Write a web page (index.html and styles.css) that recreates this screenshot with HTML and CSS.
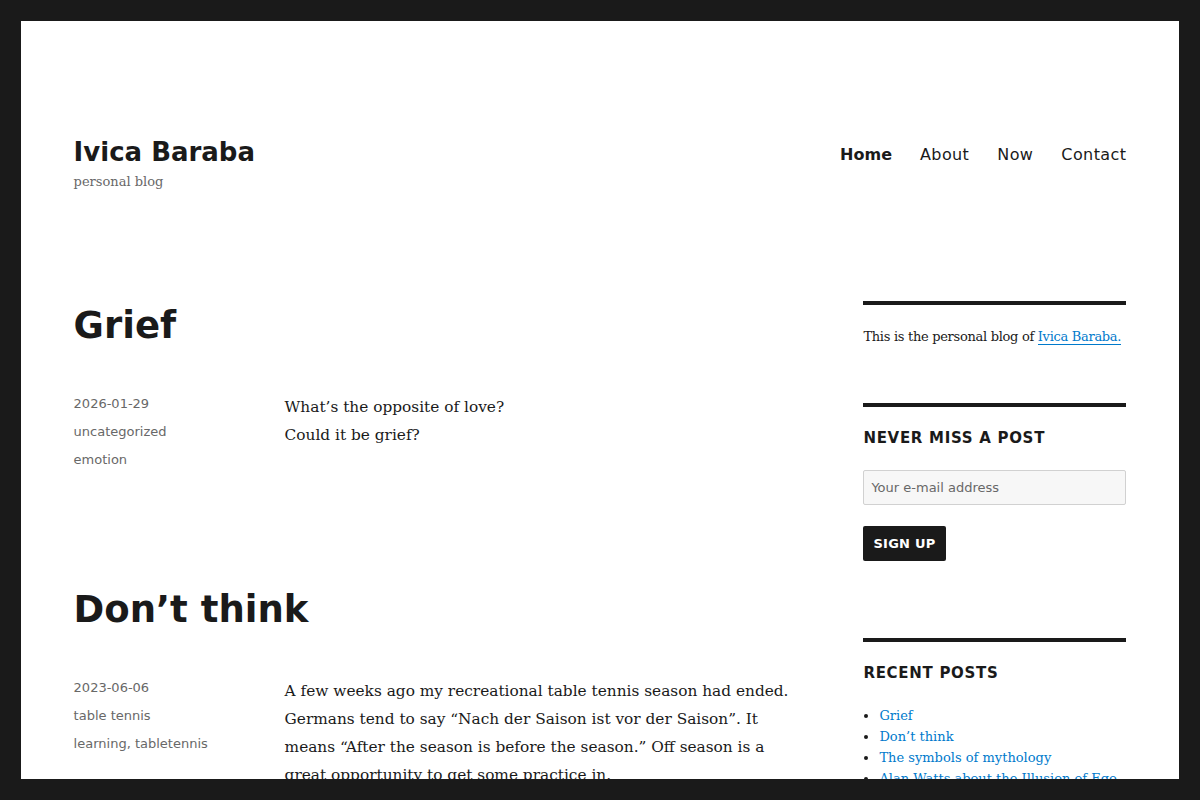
FILE: index.html
```html
<!DOCTYPE html>
<html lang="en">
<head>
<meta charset="utf-8">
<title>Ivica Baraba – personal blog</title>
<link rel="stylesheet" href="styles.css">
</head>
<body>
<div class="site">
  <header class="site-header">
    <div class="branding">
      <p class="site-title"><a href="#">Ivica Baraba</a></p>
      <p class="site-description">personal blog</p>
    </div>
    <nav class="main-nav">
      <a href="#" class="current">Home</a>
      <a href="#">About</a>
      <a href="#">Now</a>
      <a href="#">Contact</a>
    </nav>
  </header>

  <div class="site-content">
    <main class="content-area">
      <article class="post">
        <h2 class="entry-title"><a href="#">Grief</a></h2>
        <div class="entry-body">
          <footer class="entry-footer">
            <span>2026-01-29</span>
            <span>uncategorized</span>
            <span>emotion</span>
          </footer>
          <div class="entry-content">
            <p>What’s the opposite of love?<br>Could it be grief?</p>
          </div>
        </div>
      </article>

      <article class="post">
        <h2 class="entry-title"><a href="#">Don’t think</a></h2>
        <div class="entry-body">
          <footer class="entry-footer">
            <span>2023-06-06</span>
            <span>table tennis</span>
            <span>learning, tabletennis</span>
          </footer>
          <div class="entry-content">
            <p>A few weeks ago my recreational table tennis season had ended. Germans tend to say “Nach der Saison ist vor der Saison”. It means “After the season is before the season.” Off season is a great opportunity to get some practice in.</p>
            <p>Last year I played with a coach and it helped me a lot. This year I wanted to try something different.</p>
          </div>
        </div>
      </article>
    </main>

    <aside class="sidebar">
      <section class="widget">
        <p class="widget-text">This is the personal blog of <a href="#">Ivica Baraba.</a></p>
      </section>
      <section class="widget">
        <h2 class="widget-title">Never miss a post</h2>
        <form class="signup">
          <input type="email" placeholder="Your e-mail address">
          <button type="button">Sign up</button>
        </form>
      </section>
      <section class="widget">
        <h2 class="widget-title">Recent Posts</h2>
        <ul class="recent">
          <li><a href="#">Grief</a></li>
          <li><a href="#">Don’t think</a></li>
          <li><a href="#">The symbols of mythology</a></li>
          <li><a href="#">Alan Watts about the Illusion of Ego</a></li>
          <li><a href="#">Choosing a path</a></li>
        </ul>
      </section>
    </aside>
  </div>
</div>
</body>
</html>
```
FILE: styles.css
```css
html, body {
  margin: 0;
  padding: 0;
}
body {
  background: #1a1a1a;
  color: #1a1a1a;
  font-family: "DejaVu Serif", Georgia, serif;
  font-size: 16px;
  line-height: 1.75;
}
body::after {
  content: "";
  position: fixed;
  left: 0;
  right: 0;
  bottom: 0;
  height: 21px;
  background: #1a1a1a;
  z-index: 10;
}
a {
  color: inherit;
  text-decoration: none;
}
p { margin: 0; }

.site {
  margin: 21px 21px 0;
  background: #fff;
  padding: 0 52.6px;
  min-height: 1400px;
}

/* header */
.site-header {
  display: flex;
  justify-content: space-between;
  align-items: flex-start;
  padding: 114px 0 109px;
}
.site-title {
  font-family: "DejaVu Sans", sans-serif;
  font-weight: 700;
  font-size: 26px;
  line-height: 33px;
  padding-top: 1px;
}
.site-description {
  font-family: "DejaVu Serif", serif;
  font-size: 13px;
  line-height: 21px;
  color: #686868;
  padding-top: 2px;
}
.main-nav {
  display: flex;
  gap: 28px;
  padding-top: 9px;
  font-family: "DejaVu Sans", sans-serif;
  font-size: 16px;
  line-height: 21px;
  letter-spacing: 0.4px;
}
.main-nav .current { font-weight: 700; letter-spacing: 0; }

/* content */
.site-content {
  display: flex;
  gap: 52.6px;
}
.content-area {
  width: 737px;
  flex: none;
}
.post { margin-bottom: 108px; }
.entry-title {
  margin: 0 0 43px;
  font-family: "DejaVu Sans", sans-serif;
  font-weight: 700;
  font-size: 37px;
  line-height: 49px;
}
.entry-body {
  display: grid;
  grid-template-columns: 1fr 526px;
}
.entry-footer {
  display: flex;
  flex-direction: column;
  gap: 7px;
  padding-top: 0;
  font-family: "DejaVu Sans", sans-serif;
  font-size: 13px;
  line-height: 21px;
  color: #686868;
}
.entry-content {
  font-size: 15.35px;
  line-height: 28px;
}
.entry-content p { margin-bottom: 28px; }

/* sidebar */
.sidebar {
  width: 263px;
  flex: none;
  margin-left: auto;
}
.widget {
  border-top: 4px solid #1a1a1a;
  padding-top: 21px;
  margin-bottom: 56px;
}
.widget-text {
  font-size: 13px;
  line-height: 21px;
  letter-spacing: -0.3px;
}
.widget-text a {
  color: #007acc;
  box-shadow: 0 1px 0 0 currentColor;
}
.widget-title {
  margin: 0 0 21px;
  font-family: "DejaVu Sans", sans-serif;
  font-size: 15px;
  line-height: 21px;
  font-weight: 700;
  letter-spacing: 0.046875em;
  text-transform: uppercase;
}
.signup {
  display: flex;
  flex-direction: column;
  align-items: flex-start;
  gap: 21px;
  padding-bottom: 21px;
}
.signup input {
  box-sizing: border-box;
  width: 100%;
  height: 35px;
  background: #f7f7f7;
  border: 1px solid #d1d1d1;
  border-radius: 2px;
  padding: 0 7px;
  font-family: "DejaVu Sans", sans-serif;
  font-size: 13px;
  color: #1a1a1a;
}
.signup input::placeholder { color: #686868; }
.signup button {
  height: 35px;
  padding: 0 10px;
  background: #1a1a1a;
  color: #fff;
  border: 0;
  border-radius: 2px;
  font-family: "DejaVu Sans", sans-serif;
  font-weight: 700;
  font-size: 13px;
  letter-spacing: 0.02em;
  text-transform: uppercase;
}
.recent {
  margin: 0;
  padding-left: 16px;
  font-size: 13px;
  line-height: 21px;
}
.recent a { color: #007acc; }
```
